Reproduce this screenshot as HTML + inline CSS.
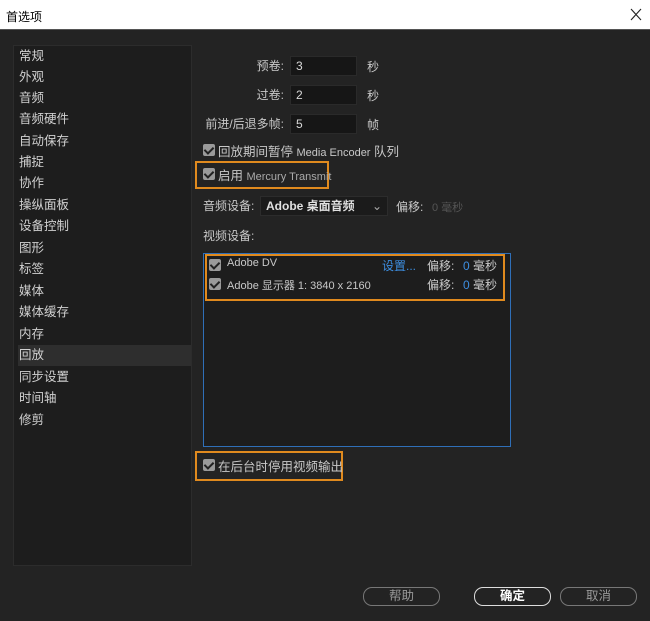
<!DOCTYPE html>
<html><head><meta charset="utf-8"><style>
*{margin:0;padding:0;box-sizing:border-box}
body{width:650px;height:621px;background:#232323;font-family:"Liberation Sans","Noto Sans CJK SC",sans-serif;color:#c8c8c8;font-size:12px;position:relative;overflow:hidden}
.a{position:absolute;white-space:nowrap}
.title{left:0;top:0;width:650px;height:30px;background:#fff;border-bottom:1px solid #555;color:#000}
.side{left:13px;top:45px;width:179px;height:521px;background:#1d1d1d;border:1px solid #2c2c2c}
.it{position:absolute;left:4px;height:21px;line-height:21px;font-size:12.5px;color:#d0d0d0;width:173px;padding-left:1px}
.sel{background:#2e2e2e}
.lbl{text-align:right;width:100px;left:184px;line-height:20px}
.inp{left:290px;width:67px;height:20px;background:#161616;border:1px solid #2a2a2a;line-height:18px;padding-left:5px;color:#d8d8d8}
.cb{width:12px;height:12px;background:#9a9a9a;border-radius:2px}
.cb:after{content:"";position:absolute;left:3px;top:1px;width:4px;height:7px;border:solid #222;border-width:0 2px 2px 0;transform:rotate(45deg)}
.or{border:2px solid #e08a1e}
.btn{height:19px;border:1px solid #777;border-radius:9px;text-align:center;line-height:17px;color:#999;font-size:12.5px}
</style></head><body>
<div class="a title"><span class="a" style="left:6px;top:8px;font-size:12px">首选项</span>
<svg class="a" style="left:630px;top:8px" width="12" height="13" viewBox="0 0 12 13"><path d="M1 1L11 12M11 1L1 12" stroke="#222" stroke-width="1.1" fill="none"/></svg></div>
<div class="a side">
<div class="it" style="top:0">常规</div><div class="it" style="top:21px">外观</div><div class="it" style="top:42px">音频</div><div class="it" style="top:63px">音频硬件</div><div class="it" style="top:85px">自动保存</div><div class="it" style="top:106px">捕捉</div><div class="it" style="top:127px">协作</div><div class="it" style="top:149px">操纵面板</div><div class="it" style="top:170px">设备控制</div><div class="it" style="top:192px">图形</div><div class="it" style="top:213px">标签</div><div class="it" style="top:235px">媒体</div><div class="it" style="top:256px">媒体缓存</div><div class="it" style="top:278px">内存</div><div class="it sel" style="top:299px">回放</div><div class="it" style="top:321px">同步设置</div><div class="it" style="top:342px">时间轴</div><div class="it" style="top:364px">修剪</div>
</div>
<div class="a lbl" style="top:56px">预卷:</div><div class="a inp" style="top:56px">3</div><div class="a" style="left:367px;top:58px">秒</div>
<div class="a lbl" style="top:85px">过卷:</div><div class="a inp" style="top:85px">2</div><div class="a" style="left:367px;top:87px">秒</div>
<div class="a lbl" style="top:114px">前进/后退多帧:</div><div class="a inp" style="top:114px">5</div><div class="a" style="left:367px;top:116px">帧</div>
<div class="a cb" style="left:203px;top:144px"></div><div class="a" style="left:218px;top:141px;font-size:12.5px">回放期间暂停 <span style="font-size:11px">Media Encoder</span> 队列</div>
<div class="a or" style="left:195px;top:161px;width:134px;height:28px"></div>
<div class="a cb" style="left:203px;top:168px"></div><div class="a" style="left:218px;top:165px;font-size:12.5px">启用 <span style="font-size:11px;color:#aaa">Mercury Transmit</span></div>
<div class="a" style="left:203px;top:197px">音频设备:</div>
<div class="a" style="left:260px;top:196px;width:128px;height:20px;background:#1b1b1b;border:1px solid #2c2c2c;line-height:18px;padding-left:5px;color:#e0e0e0;font-weight:bold">Adobe 桌面音频<span class="a" style="right:5px;top:0;font-weight:normal;color:#aaa">⌄</span></div>
<div class="a" style="left:396px;top:198px">偏移:</div><div class="a" style="left:432px;top:199px;color:#555;font-size:11px">0 毫秒</div>
<div class="a" style="left:203px;top:227px">视频设备:</div>
<div class="a" style="left:203px;top:253px;width:308px;height:194px;background:#1d1d1d;border:1px solid #2f6fb8"></div>
<div class="a or" style="left:205px;top:254px;width:300px;height:47px"></div>
<div class="a cb" style="left:209px;top:259px"></div><div class="a" style="left:227px;top:257px;font-size:11px">Adobe DV</div>
<div class="a" style="left:382px;top:257px;color:#3d8ee0">设置...</div><div class="a" style="left:427px;top:257px">偏移:</div><div class="a" style="left:463px;top:257px"><span style="color:#3d8ee0">0</span> 毫秒</div>
<div class="a cb" style="left:209px;top:278px"></div><div class="a" style="left:227px;top:277px;font-size:11px">Adobe 显示器 1:  3840 x 2160</div>
<div class="a" style="left:427px;top:276px">偏移:</div><div class="a" style="left:463px;top:276px"><span style="color:#3d8ee0">0</span> 毫秒</div>
<div class="a or" style="left:195px;top:451px;width:148px;height:30px"></div>
<div class="a cb" style="left:203px;top:459px"></div><div class="a" style="left:218px;top:456px;font-size:12.5px">在后台时停用视频输出</div>
<div class="a btn" style="left:363px;top:587px;width:77px">帮助</div>
<div class="a btn" style="left:474px;top:587px;width:77px;border-color:#ddd;color:#fff;font-weight:bold">确定</div>
<div class="a btn" style="left:560px;top:587px;width:77px">取消</div>
</body></html>
